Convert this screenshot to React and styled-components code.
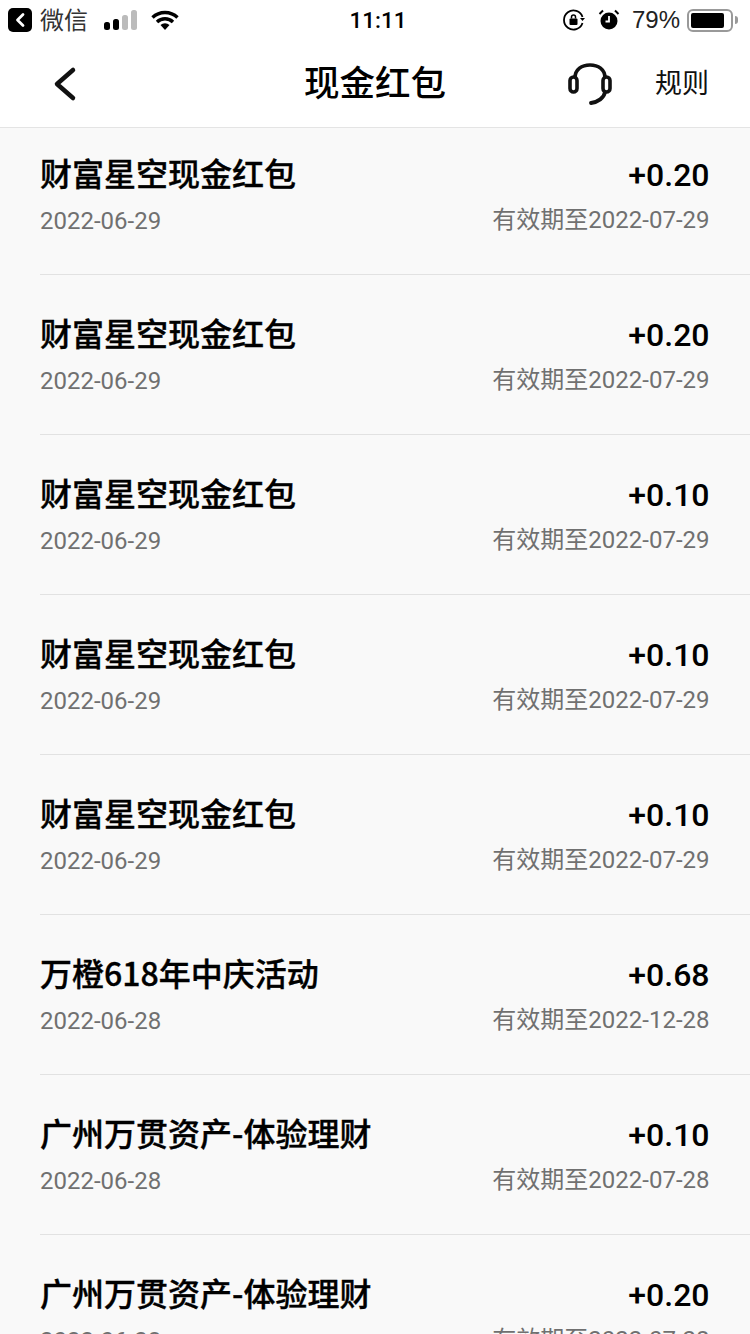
import styled, { createGlobalStyle } from 'styled-components';

const GlobalStyle = createGlobalStyle`
  html, body {
    margin: 0;
    padding: 0;
    background: #f9f9f9;
  }
  * {
    box-sizing: border-box;
  }
`;

const Page = styled.div`
  width: 750px;
  height: 1334px;
  overflow: hidden;
  background: #f9f9f9;
  font-family: Roboto, "Noto Sans CJK SC", sans-serif;
  color: #000;
`;

const StatusBar = styled.div`
  height: 40px;
  background: #fff;
  display: grid;
  grid-template-columns: 1fr auto 1fr;
  align-items: center;
  padding: 0 12px 0 8px;
`;

const StatusLeft = styled.div`
  display: flex;
  align-items: center;
`;

const StatusRight = styled.div`
  display: flex;
  align-items: center;
  justify-content: flex-end;
`;

const BackBadge = styled.div`
  width: 24px;
  height: 24px;
  border-radius: 5px;
  background: #000;
  display: flex;
  align-items: center;
  justify-content: center;
  margin-right: 8px;
`;

const AppName = styled.span`
  font-family: "Noto Sans CJK SC", sans-serif;
  font-size: 24px;
  line-height: 30px;
  color: #333;
  margin: -2px 16px 0 0;
`;

const Signal = styled.div`
  display: flex;
  align-items: flex-end;
  gap: 3px;
  height: 20px;
  margin-right: 14px;
`;

const SignalBar = styled.span`
  width: 6px;
  height: ${props => props.$h}px;
  border-radius: 2.5px;
  background: ${props => (props.$on ? '#000' : '#bbb')};
`;

const Clock = styled.span`
  font-size: 22.5px;
  font-weight: 500;
  line-height: 30px;
  padding-left: 10px;
`;

const Percent = styled.span`
  font-family: "Liberation Sans", sans-serif;
  font-size: 24px;
  line-height: 30px;
  color: #222;
  margin: 0 7px 0 12px;
`;

const Battery = styled.div`
  width: 46px;
  height: 23px;
  border: 2px solid #999;
  border-radius: 6px;
  padding: 2px;
`;

const BatteryFill = styled.div`
  width: 33px;
  height: 100%;
  background: #000;
  border-radius: 2px;
`;

const BatteryTip = styled.span`
  width: 3px;
  height: 8px;
  margin-left: 2px;
  border-radius: 0 3px 3px 0;
  background: #999;
`;

const NavBar = styled.div`
  height: 88px;
  background: #fff;
  border-bottom: 1px solid #e4e4e4;
  display: grid;
  grid-template-columns: 1fr auto 1fr;
  align-items: center;
  padding: 0 41px;
`;

const BackButton = styled.div`
  margin-left: 11px;
  display: flex;
`;

const NavTitle = styled.h1`
  margin: 0;
  padding-bottom: 5px;
  font-family: "Noto Sans CJK SC", sans-serif;
  font-size: 35.5px;
  font-weight: 500;
  line-height: 50px;
`;

const NavActions = styled.div`
  display: flex;
  align-items: center;
  justify-content: flex-end;
  gap: 42px;
`;

const RuleLink = styled.span`
  padding-bottom: 3px;
  font-family: "Noto Sans CJK SC", sans-serif;
  font-size: 27px;
  line-height: 36px;
  color: #111;
`;

const Row = styled.div`
  height: ${props => (props.$first ? 147 : 160)}px;
  margin-left: 40px;
  padding: ${props => (props.$first ? 26 : 39)}px 40.5px 0 0;
  border-bottom: 1px solid #e2e2e2;
`;

const Line = styled.div`
  display: flex;
  justify-content: space-between;
  align-items: center;
  height: ${props => props.$h}px;
`;

const Title = styled.span`
  font-family: "Noto Sans CJK SC", sans-serif;
  font-size: 32px;
  font-weight: 500;
  -webkit-text-stroke: 0.35px #000;
  line-height: 42px;
  padding-bottom: 7px;
`;

const Amount = styled.span`
  font-family: Roboto, sans-serif;
  font-size: 32px;
  font-weight: 500;
  line-height: 42px;
`;

const SubText = styled.span`
  font-family: Roboto, "Noto Sans CJK SC", sans-serif;
  font-size: 24px;
  line-height: 32px;
  color: #707070;
`;

const Expiry = styled(SubText)`
  padding-bottom: 2px;
`;

const rows = [
  ['财富星空现金红包', '+0.20', '2022-06-29', '2022-07-29'],
  ['财富星空现金红包', '+0.20', '2022-06-29', '2022-07-29'],
  ['财富星空现金红包', '+0.10', '2022-06-29', '2022-07-29'],
  ['财富星空现金红包', '+0.10', '2022-06-29', '2022-07-29'],
  ['财富星空现金红包', '+0.10', '2022-06-29', '2022-07-29'],
  ['万橙618年中庆活动', '+0.68', '2022-06-28', '2022-12-28'],
  ['广州万贯资产-体验理财', '+0.10', '2022-06-28', '2022-07-28'],
  ['广州万贯资产-体验理财', '+0.20', '2022-06-28', '2022-07-28'],
];

const App = () => (
  <Page>
    <GlobalStyle />
    <StatusBar>
      <StatusLeft>
        <BackBadge>
          <svg width="12" height="16" viewBox="0 0 12 16">
            <path d="M9 2.5 3.5 8 9 13.5" fill="none" stroke="#fff" strokeWidth="2.8" strokeLinecap="round" strokeLinejoin="round" />
          </svg>
        </BackBadge>
        <AppName>微信</AppName>
        <Signal>
          <SignalBar $on $h={8} />
          <SignalBar $on $h={11} />
          <SignalBar $h={15} />
          <SignalBar $h={20} />
        </Signal>
        <svg width="28" height="20" viewBox="0 0 28 20">
          <path d="M1.5 7.5a18 18 0 0 1 25 0" fill="none" stroke="#000" strokeWidth="3.4" />
          <path d="M6 12a11.500 11.500 0 0 1 16 0" fill="none" stroke="#000" strokeWidth="3.4" />
          <path d="M14 20l-4.500-5a6.500 6.500 0 0 1 9 0z" fill="#000" />
        </svg>
      </StatusLeft>
      <Clock>11:11</Clock>
      <StatusRight>
        <svg width="24" height="24" viewBox="0 0 24 24" style={{ marginRight: 12 }}>
          <path d="M20.500 15a9.500 9.500 0 1 1 0-6" fill="none" stroke="#000" strokeWidth="1.800" />
          <path d="M18 10h5l-2.500 3z" fill="#000" />
          <rect x="7.500" y="10.500" width="8" height="6.500" rx="1" fill="#000" />
          <path d="M9.500 10.500V9a2 2 0 0 1 4 0v1.500" fill="none" stroke="#000" strokeWidth="1.500" />
        </svg>
        <svg width="22" height="22" viewBox="0 0 22 22">
          <circle cx="11" cy="12" r="8.500" fill="#000" />
          <path d="M11 7v5.500H7.500" fill="none" stroke="#fff" strokeWidth="1.800" />
          <path d="M1.500 5 5 1.500M20.500 5 17 1.500" fill="none" stroke="#000" strokeWidth="2" />
        </svg>
        <Percent>79%</Percent>
        <Battery>
          <BatteryFill />
        </Battery>
        <BatteryTip />
      </StatusRight>
    </StatusBar>
    <NavBar>
      <BackButton>
        <svg width="26" height="36" viewBox="0 0 26 36">
          <path d="M21 4 5 18l16 14" fill="none" stroke="#111" strokeWidth="4.500" strokeLinecap="round" strokeLinejoin="round" />
        </svg>
      </BackButton>
      <NavTitle>现金红包</NavTitle>
      <NavActions>
        <svg width="46" height="42" viewBox="0 0 46 42">
          <path d="M8 15C8 6 15 2 23 2s15 4 15 13" fill="none" stroke="#111" strokeWidth="3.600" />
          <rect x="3" y="14" width="7" height="15" rx="3.500" fill="none" stroke="#111" strokeWidth="3.600" />
          <rect x="36" y="14" width="7" height="15" rx="3.500" fill="none" stroke="#111" strokeWidth="3.600" />
          <path d="M38 29c-1 6-7 10-14 11" fill="none" stroke="#111" strokeWidth="3.800" strokeLinecap="round" />
        </svg>
        <RuleLink>规则</RuleLink>
      </NavActions>
    </NavBar>
    {rows.map(([title, amount, date, expiry], i) => (
      <Row key={i} $first={i === 0}>
        <Line $h={42}>
          <Title>{title}</Title>
          <Amount>{amount}</Amount>
        </Line>
        <Line $h={50}>
          <SubText>{date}</SubText>
          <Expiry>有效期至{expiry}</Expiry>
        </Line>
      </Row>
    ))}
  </Page>
);

export default App;
